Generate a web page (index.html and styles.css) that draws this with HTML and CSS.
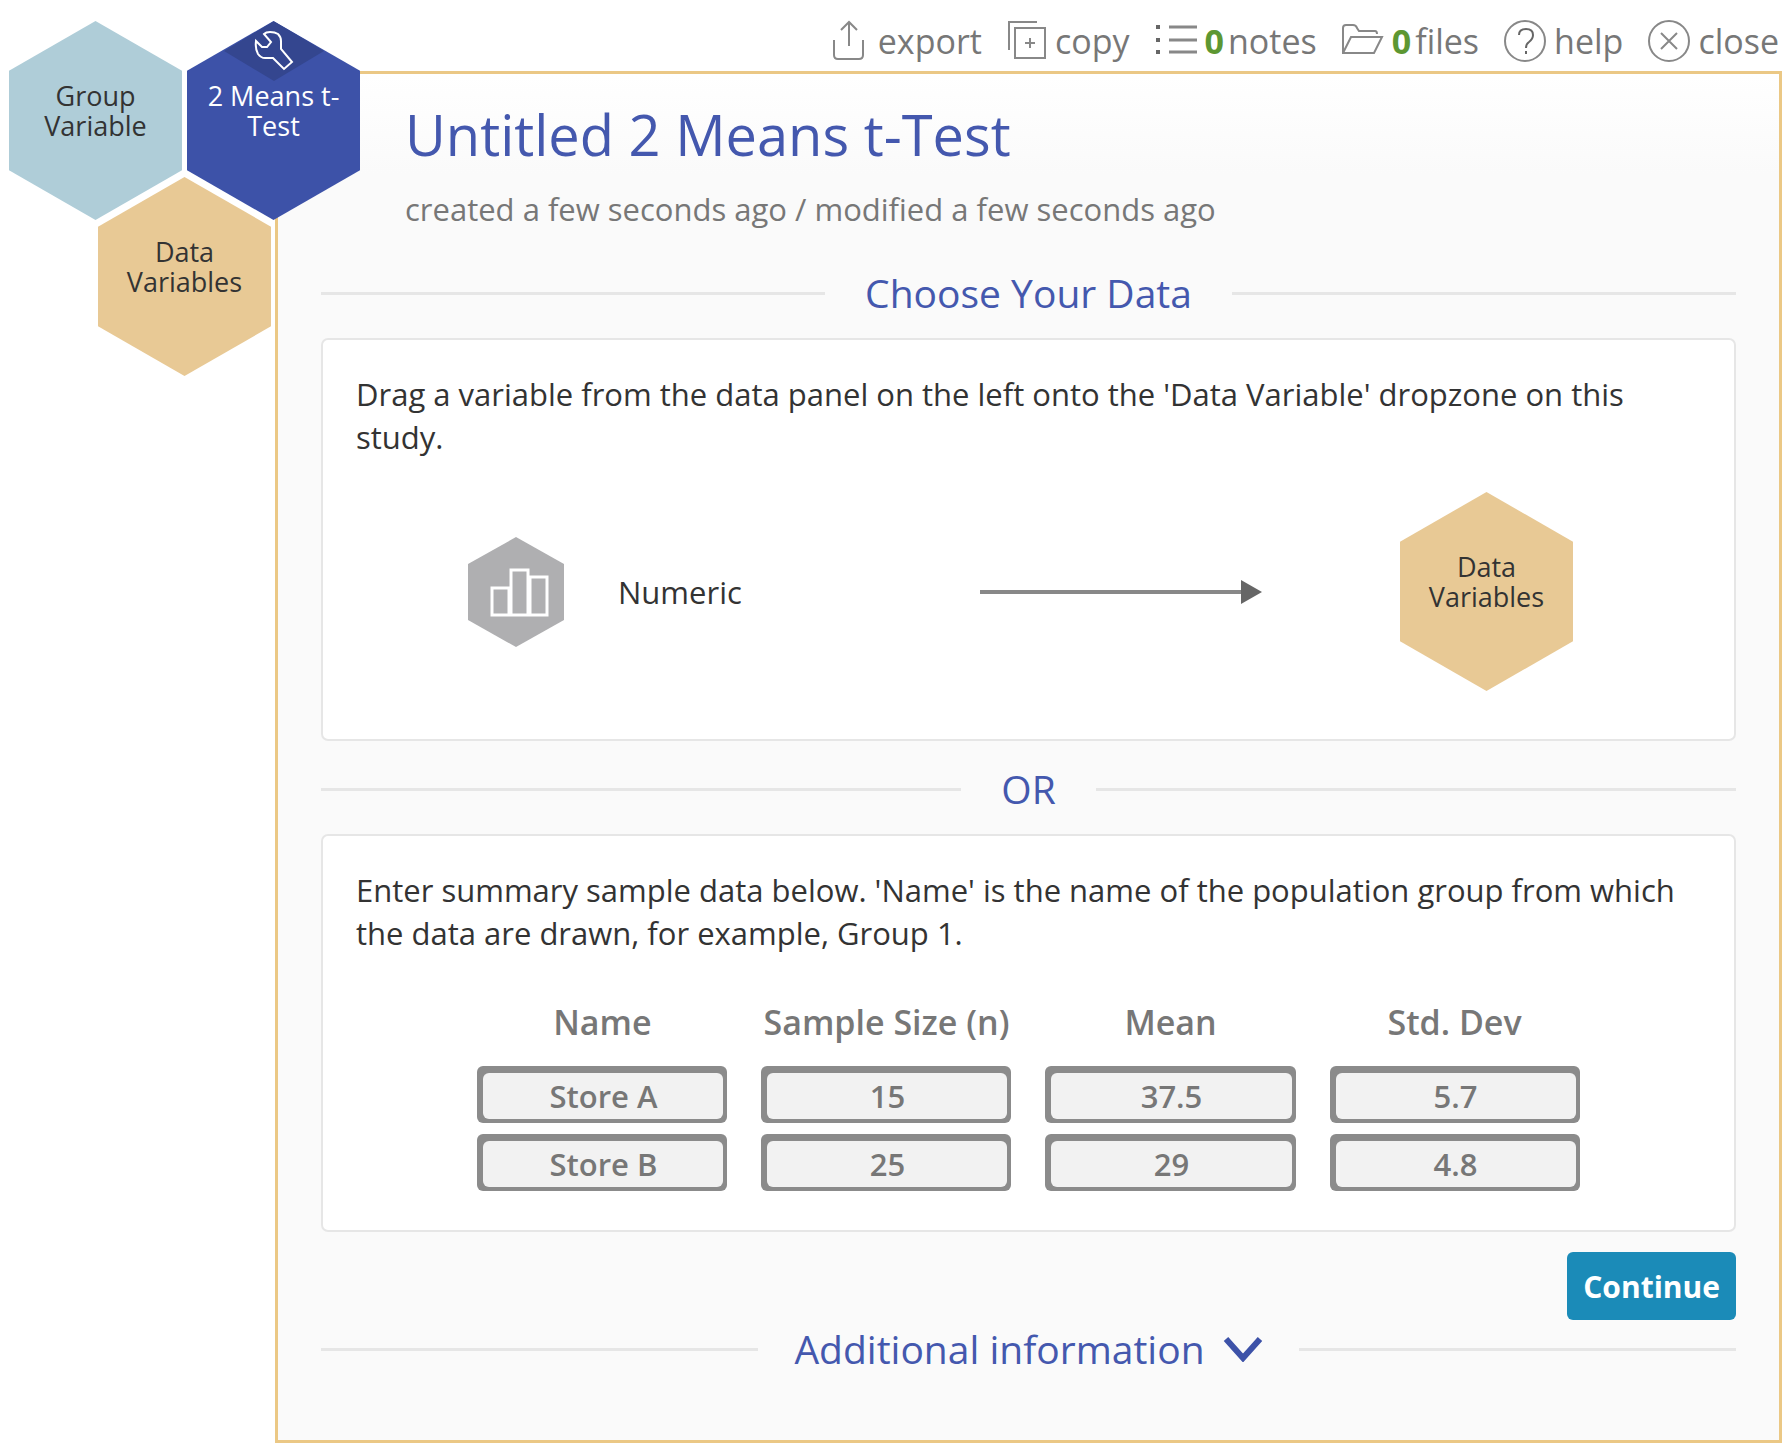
FILE: index.html
```html
<!DOCTYPE html>
<html lang="en">
<head>
  <meta charset="UTF-8">
  <title>Untitled 2 Means t-Test</title>
  <link rel="stylesheet" href="styles.css">
</head>
<body>

  <div class="study">

    <!-- TOOLBAR -->
    <div class="toolbar">
      <button class="tool">
        <svg width="42" height="42" viewBox="0 0 42 42"><path d="M6 20v15q0 4 4 4h21q4 0 4-4V20M21 26V3M13 10l8-8 8 8"/></svg>
        export
      </button>
      <button class="tool">
        <svg width="40" height="42" viewBox="0 0 40 42"><path d="M2 30V2h28M8 8h30v30H8zM23 18v10M18 23h10"/></svg>
        copy
      </button>
      <button class="tool">
        <svg width="42" height="42" viewBox="0 0 42 42"><path class="thick" d="M1 7h4M1 20h4M1 32h4"/><path class="rules" d="M14 7h28M14 20h28M14 32h28"/></svg>
        <b>0</b> notes
      </button>
      <button class="tool">
        <svg width="42" height="42" viewBox="0 0 42 42"><path d="M1 33V8q0-3 3-3h7q3 0 4 3l2 3h16q2 0 2 3M1 33L9 17h31l-8 16z"/></svg>
        <b>0</b> files
      </button>
      <button class="tool">
        <svg width="42" height="42" viewBox="0 0 42 42"><circle cx="21" cy="21" r="20"/><path class="mark" d="M15 15q0-6 7-6t7 6q0 4-4 7-3 2-3 6M22 31v3"/></svg>
        help
      </button>
      <button class="tool">
        <svg width="42" height="42" viewBox="0 0 42 42"><circle cx="21" cy="21" r="20"/><path d="M13 13l16 16M29 13L13 29"/></svg>
        close
      </button>
    </div>

    <!-- PANEL -->
    <main class="panel">
      <h1>Untitled 2 Means t-Test</h1>
      <p class="dates">created a few seconds ago / modified a few seconds ago</p>

      <h2 class="divider">Choose Your Data</h2>

      <section class="card">
        <p>Drag a variable from the data panel on the left onto the 'Data Variable' dropzone on this study.</p>
        <div class="drag-demo">
          <div class="variable">
            <svg width="96" height="110" viewBox="0 0 96 110">
              <path class="chip" d="M48 0l48 27v56l-48 27L0 83V27z"/>
              <path class="bars" d="M24 51h17v27H24zM43 33h17v45H43zM62 40h17v38H62z"/>
            </svg>
            <span>Numeric</span>
          </div>
          <div class="arrow"></div>
          <div class="hex hex-data">Data<br>Variables</div>
        </div>
      </section>

      <h2 class="divider divider-or">OR</h2>

      <section class="card card-summary">
        <p>Enter summary sample data below. 'Name' is the name of the population group from which the data are drawn, for example, Group 1.</p>
        <table>
          <thead>
            <tr>
              <th id="name">Name</th>
              <th id="size">Sample Size (n)</th>
              <th id="mean">Mean</th>
              <th id="dev">Std. Dev</th>
            </tr>
          </thead>
          <tbody>
            <tr>
              <td><div class="field"><input type="text" aria-labelledby="name" value="Store A"></div></td>
              <td><div class="field"><input type="text" aria-labelledby="size" value="15"></div></td>
              <td><div class="field"><input type="text" aria-labelledby="mean" value="37.5"></div></td>
              <td><div class="field"><input type="text" aria-labelledby="dev" value="5.7"></div></td>
            </tr>
            <tr>
              <td><div class="field"><input type="text" aria-labelledby="name" value="Store B"></div></td>
              <td><div class="field"><input type="text" aria-labelledby="size" value="25"></div></td>
              <td><div class="field"><input type="text" aria-labelledby="mean" value="29"></div></td>
              <td><div class="field"><input type="text" aria-labelledby="dev" value="4.8"></div></td>
            </tr>
          </tbody>
        </table>
      </section>

      <div class="actions">
        <button class="btn-continue">Continue</button>
      </div>

      <h2 class="divider divider-more">
        <button class="btn-more">
          Additional information
          <svg width="40" height="26" viewBox="0 0 40 26"><path d="M3 3l17 19L37 3"/></svg>
        </button>
      </h2>
    </main>

    <!-- DROPZONES -->
    <div class="dropzones">
      <div class="hex hex-group">Group<br>Variable</div>
      <div class="hex hex-study">
        <span class="hex-tab">
          <svg width="40" height="40" viewBox="0 0 40 40"><path d="M10 3q2-2 6-2 5 0 8 2 3 3 3 7v8l11 13-8 7-11-11h-8q-4 0-7-4-3-5-2-13l6 6h5l4-5z"/></svg>
        </span>
        2 Means t-<br>Test
      </div>
      <div class="hex hex-data">Data<br>Variables</div>
    </div>

  </div>

</body>
</html>
```
FILE: styles.css
```css
* {
  box-sizing: border-box;
}

body {
  margin: 0;
  background: #fff;
  color: #333;
  font-family: 'Open Sans', sans-serif;
  font-size: 31px;
}

h1, h2, p {
  margin: 0;
  font-weight: normal;
}

button {
  border: none;
  background: none;
  padding: 0;
  font-family: inherit;
  cursor: pointer;
}

svg {
  fill: none;
  flex-shrink: 0;
}

.study {
  position: relative;
  padding: 0 9px 10px 275px;
}

/* Toolbar */
.toolbar {
  display: flex;
  justify-content: flex-end;
  height: 71px;
  padding: 19px 3px 0 0;
  gap: 25px;
}

.tool {
  display: flex;
  align-items: center;
  gap: 8px;
  height: 44px;
  font-size: 34px;
  color: #777;
}

.tool svg {
  stroke: #888;
  stroke-width: 2;
}

.tool .thick {
  stroke: #666;
  stroke-width: 4;
}

.tool .rules {
  stroke-width: 3;
}

.tool .mark {
  stroke: #666;
}

.tool b {
  margin-right: -4px;
  color: #5d9732;
}

/* Panel */
.panel {
  border: 3px solid #ebc885;
  padding: 24px 43px 66px;
  background: linear-gradient(#fff, #fafafa 100px);
}

h1 {
  padding-left: 84px;
  font-size: 56px;
  line-height: 72px;
  color: #4458ae;
}

.dates {
  padding-left: 84px;
  margin-top: 17px;
  line-height: 44px;
  color: #777;
}

.divider {
  display: flex;
  align-items: center;
  gap: 40px;
  margin: 37px 0 20px;
  font-size: 39px;
  line-height: 50px;
  color: #4458ae;
}

.divider::before,
.divider::after {
  content: "";
  flex: 1;
  height: 3px;
  background: #e6e6e6;
}

.divider-or {
  margin: 23px 0 20px;
}

.card {
  padding: 33px 33px 48px;
  border: 2px solid #e6e6e6;
  border-radius: 7px;
  background: #fff;
}

.card p {
  line-height: 43px;
}

/* Drag example */
.drag-demo {
  display: grid;
  grid-template-columns: auto 238fr 283fr 138fr auto;
  align-items: center;
  margin-top: 33px;
  padding: 0 128px 0 112px;
}

.variable {
  display: flex;
  align-items: center;
  gap: 54px;
}

.chip {
  fill: #afafb1;
}

.bars {
  stroke: #fff;
  stroke-width: 3;
}

.arrow {
  grid-column: 3;
  display: flex;
  align-items: center;
}

.arrow::before {
  content: "";
  flex: 1;
  height: 4px;
  background: #888;
}

.arrow::after {
  content: "";
  border: 12px solid transparent;
  border-left: 21px solid #666;
  border-right: none;
}

.drag-demo .hex {
  grid-column: 5;
}

/* Hexagons */
.hex {
  width: 173px;
  height: 199px;
  padding-top: 60px;
  font-size: 27px;
  line-height: 30px;
  text-align: center;
  clip-path: polygon(50% 0, 100% 25%, 100% 75%, 50% 100%, 0 75%, 0 25%);
}

.hex-group {
  background: #afcdd8;
}

.hex-study {
  position: relative;
  background: #3d52a8;
  color: #fff;
  font-weight: 500;
}

.hex-data {
  background: #e8c995;
}

.hex-tab {
  position: absolute;
  top: 0;
  left: 37px;
  width: 100px;
  height: 60px;
  padding-top: 10px;
  background: #34468f;
  clip-path: polygon(50% 0, 100% 50%, 50% 100%, 0 50%);
}

.hex-tab svg {
  display: block;
  margin: 0 auto;
  stroke: #fff;
  stroke-width: 2;
}

/* The dropzones hang over the corner of the panel */
.dropzones {
  position: absolute;
  top: 21px;
  left: 9px;
  display: flex;
  flex-wrap: wrap;
  justify-content: center;
  width: 351px;
  column-gap: 5px;
}

.dropzones .hex-data {
  margin-top: -43px;
}

/* Summary data */
.card-summary {
  padding-bottom: 28px;
}

table {
  width: 87%;
  margin: 22px auto 0;
  table-layout: fixed;
  border-spacing: 34px 11px;
}

th, td {
  padding: 0;
}

th {
  height: 67px;
  font-size: 34px;
  font-weight: 600;
  line-height: 44px;
  color: #777;
  white-space: nowrap;
}

.field {
  padding: 7px 4px 4px 6px;
  border-radius: 6px;
  background: #8b8b8b;
}

.field input {
  display: block;
  width: 100%;
  height: 46px;
  padding: 0;
  border: none;
  border-radius: 6px;
  background: #f2f2f2;
  font-family: inherit;
  font-size: 31px;
  font-weight: 600;
  text-align: center;
  color: #777;
}

/* Footer */
.actions {
  display: flex;
  justify-content: flex-end;
  margin-top: 20px;
}

.btn-continue {
  height: 68px;
  padding: 0 16px;
  border-radius: 6px;
  background: #1b8bb8;
  color: #fff;
  font-size: 30px;
  font-weight: bold;
}

.divider-more {
  gap: 36px;
  margin: 4px 0 0;
}

.btn-more {
  display: flex;
  align-items: center;
  gap: 18px;
  font-size: 39px;
  line-height: 50px;
  color: inherit;
}

.btn-more svg {
  stroke: #3d52a8;
  stroke-width: 6;
}
```
